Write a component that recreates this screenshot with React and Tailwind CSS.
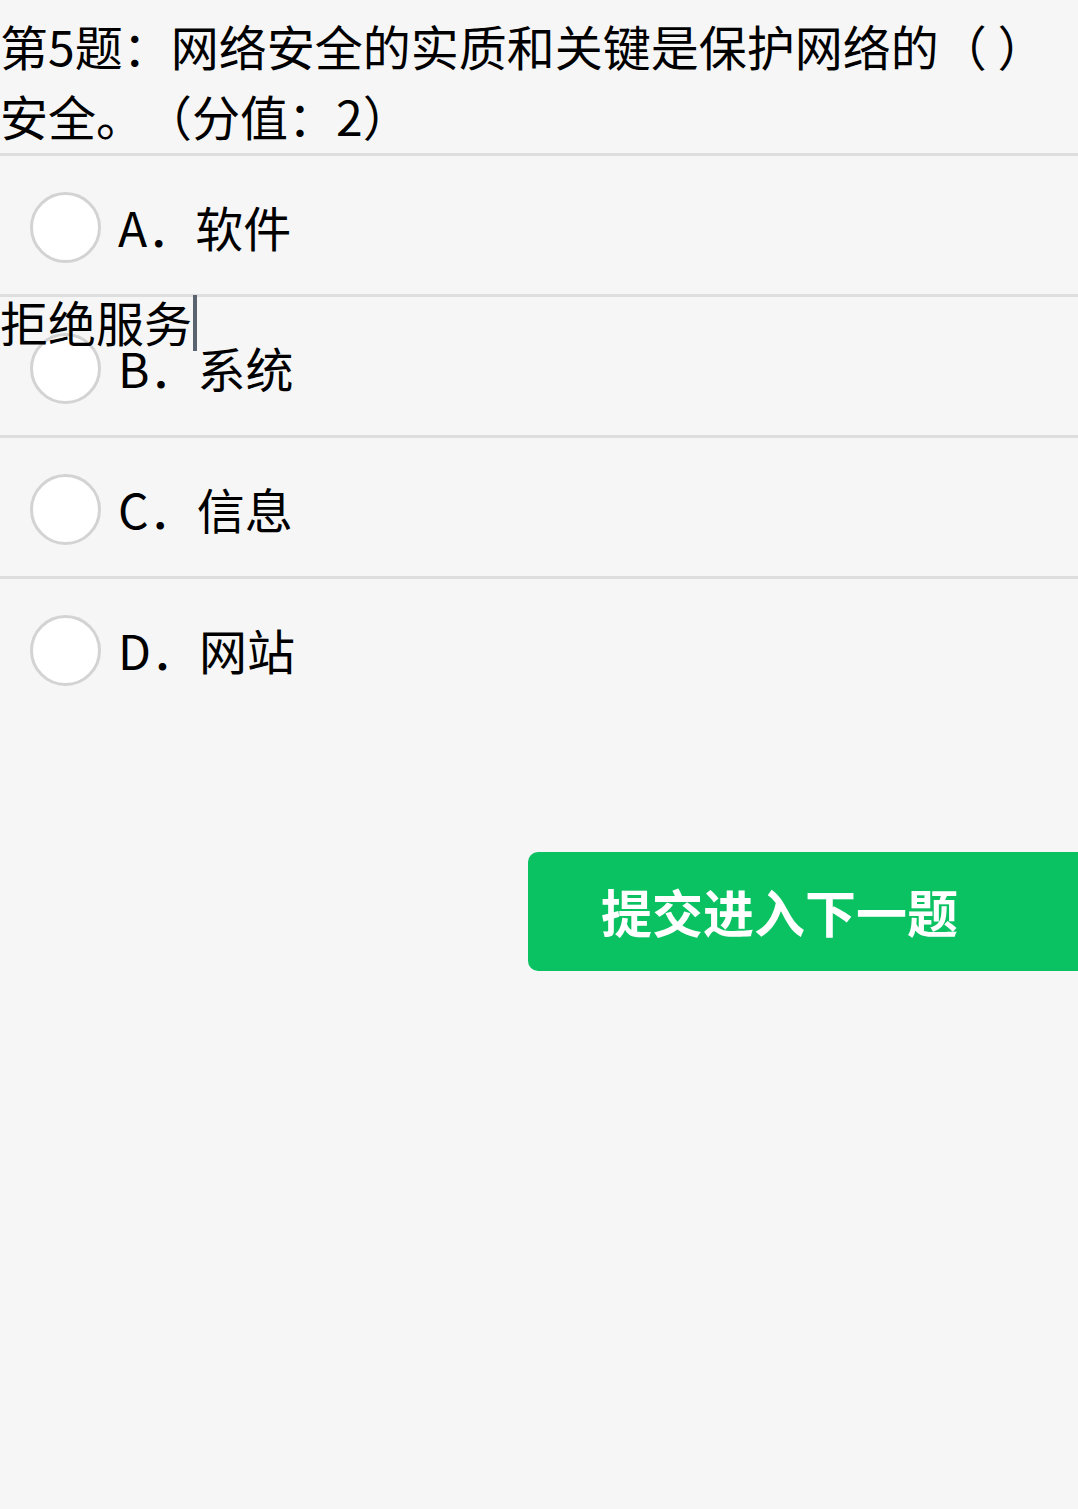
import React, { useState } from "react";

const opciones = [
  { letra: "A", texto: "软件" },
  { letra: "B", texto: "系统" },
  { letra: "C", texto: "信息" },
  { letra: "D", texto: "网站" },
];

export default function App() {
  const [elegida, setElegida] = useState(null);

  return (
    <div
      className="min-h-screen w-full overflow-hidden bg-[#f6f6f6] text-black [text-spacing-trim:space-all]"
      style={{ fontFamily: '"Noto Sans CJK SC", "Noto Sans", sans-serif' }}
    >
      <div className="pt-[10px] pb-[3px] text-[48px] leading-[70px] pr-[20px]">
        第5题：网络安全的实质和关键是保护网络的（ ）安全。（分值：2）
      </div>

      <div>
        {opciones.map((op, i) => (
          <div
            key={op.letra}
            onClick={() => setElegida(i)}
            className="relative flex h-[141px] items-center border-t-[3px] border-[#dedede] pl-[30px]"
          >
            <span
              className={`mt-[4px] h-[71px] w-[71px] shrink-0 rounded-full border-[3px] border-[#d3d3d3] ${
                elegida === i ? "bg-[#07c160]" : "bg-white"
              }`}
            />
            <span className="ml-[17px] mt-[2px] text-[48px] leading-[70px]">
              {op.letra}．{op.texto}
            </span>

            {op.letra === "B" && (
              <div className="absolute left-0 top-[-11px] flex items-start text-[48px] leading-[70px]">
                <span>拒绝服务</span>
                <span className="mt-[9px] ml-[1px] h-[56px] w-[4px] bg-[#5b6270]" />
              </div>
            )}
          </div>
        ))}
      </div>

      <div className="mt-[135px] flex">
        <button className="ml-[528px] h-[119px] w-[570px] shrink-0 rounded-[10px] bg-[#0ac262] pl-[73px] text-left text-[51px] font-bold text-white">
          提交进入下一题
        </button>
      </div>
    </div>
  );
}
